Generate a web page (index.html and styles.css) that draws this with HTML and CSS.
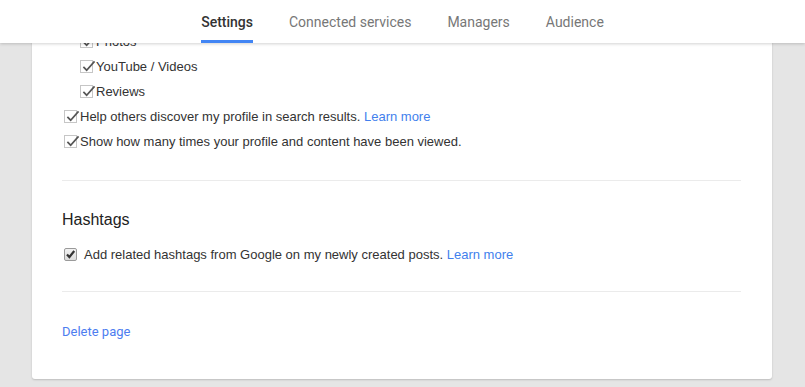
FILE: index.html
```html
<!DOCTYPE html>
<html lang="en">
<head>
    <meta charset="UTF-8">
    <title>Page settings</title>
    <link rel="stylesheet" href="styles.css">
</head>
<body>

    <div class="top-bar">
        <nav class="tabs">
            <a class="tab active">Settings</a>
            <a class="tab">Connected services</a>
            <a class="tab">Managers</a>
            <a class="tab">Audience</a>
        </nav>
    </div>

    <div class="card">
        <div class="section">
            <label class="row nested"><span class="check"><svg viewBox="0 0 16 14"><path d="M2.5 7.5 L6 11 L14.5 1.5"/></svg></span>Photos</label>
            <label class="row nested"><span class="check"><svg viewBox="0 0 16 14"><path d="M2.5 7.5 L6 11 L14.5 1.5"/></svg></span>YouTube / Videos</label>
            <label class="row nested"><span class="check"><svg viewBox="0 0 16 14"><path d="M2.5 7.5 L6 11 L14.5 1.5"/></svg></span>Reviews</label>
            <label class="row"><span class="check"><svg viewBox="0 0 16 14"><path d="M2.5 7.5 L6 11 L14.5 1.5"/></svg></span>Help others discover my profile in search results.&nbsp;<a class="link">Learn more</a></label>
            <label class="row"><span class="check"><svg viewBox="0 0 16 14"><path d="M2.5 7.5 L6 11 L14.5 1.5"/></svg></span>Show how many times your profile and content have been viewed.</label>
        </div>

        <div class="section hashtags">
            <h3>Hashtags</h3>
            <label class="row"><span class="native-check"><svg viewBox="0 0 10 10"><path d="M1.8 5 L4 7.3 L8.4 1.8"/></svg></span>Add related hashtags from Google on my newly created posts.&nbsp;<a class="link">Learn more</a></label>
        </div>

        <div class="footer">
            <a class="delete">Delete page</a>
        </div>
    </div>

</body>
</html>
```

FILE: styles.css
```css
body {
    margin: 0;
    background: #e5e5e5;
    font-family: 'Liberation Sans', Arial, sans-serif;
    font-size: 13px;
    color: #333;
    height: 387px;
    overflow: hidden;
}
.top-bar {
    position: absolute;
    top: 0;
    left: 0;
    right: 0;
    height: 43px;
    background: white;
    box-shadow: 0 1px 3px rgba(0,0,0,0.18);
    z-index: 2;
}
.tabs {
    display: flex;
    justify-content: center;
    gap: 36px;
    height: 43px;
}
.tab {
    font-family: Roboto, sans-serif;
    font-size: 14px;
    color: #777;
    line-height: 44px;
    border-bottom: 3px solid transparent;
    box-sizing: border-box;
    height: 43px;
}
.tab.active {
    color: #333;
    font-weight: 500;
    border-bottom-color: #4285f4;
}
.card {
    width: 740px;
    margin-left: 32px;
    padding: 29px 31px 0 30px;
    box-sizing: border-box;
    height: 379px;
    background: white;
    border-radius: 0 0 3px 3px;
    box-shadow: 0 1px 2px rgba(0,0,0,0.18);
}
.section {
    padding-bottom: 26px;
    border-bottom: 1px solid #ebebeb;
}
.row {
    display: flex;
    align-items: center;
    height: 25px;
    padding-left: 2px;
}
.row.nested { padding-left: 18px; }
.check {
    position: relative;
    width: 11px;
    height: 11px;
    border: 1px solid #c6c6c6;
    margin-right: 3px;
    flex: none;
}
.check svg {
    position: absolute;
    left: 0;
    top: -1px;
    width: 15px;
    height: 13px;
    fill: none;
    stroke: #555;
    stroke-width: 1.8;
}
.link { color: #427fed; }
.hashtags {
    padding-top: 29px;
    padding-bottom: 24px;
}
h3 {
    margin: 0 0 12px;
    font-size: 16px;
    font-weight: normal;
    line-height: 20px;
    color: #222;
}
.native-check {
    width: 11px;
    height: 11px;
    border: 1px solid #9a9a9a;
    border-radius: 2px;
    background: linear-gradient(#f2f2f2, #dcdcdc);
    margin-right: 7px;
    display: flex;
    flex: none;
}
.native-check svg {
    width: 11px;
    height: 11px;
    fill: none;
    stroke: #333;
    stroke-width: 2;
}
.footer {
    padding-top: 32px;
}
.delete {
    font-family: Roboto, sans-serif;
    font-size: 13px;
    color: #4d7df0;
}
```
